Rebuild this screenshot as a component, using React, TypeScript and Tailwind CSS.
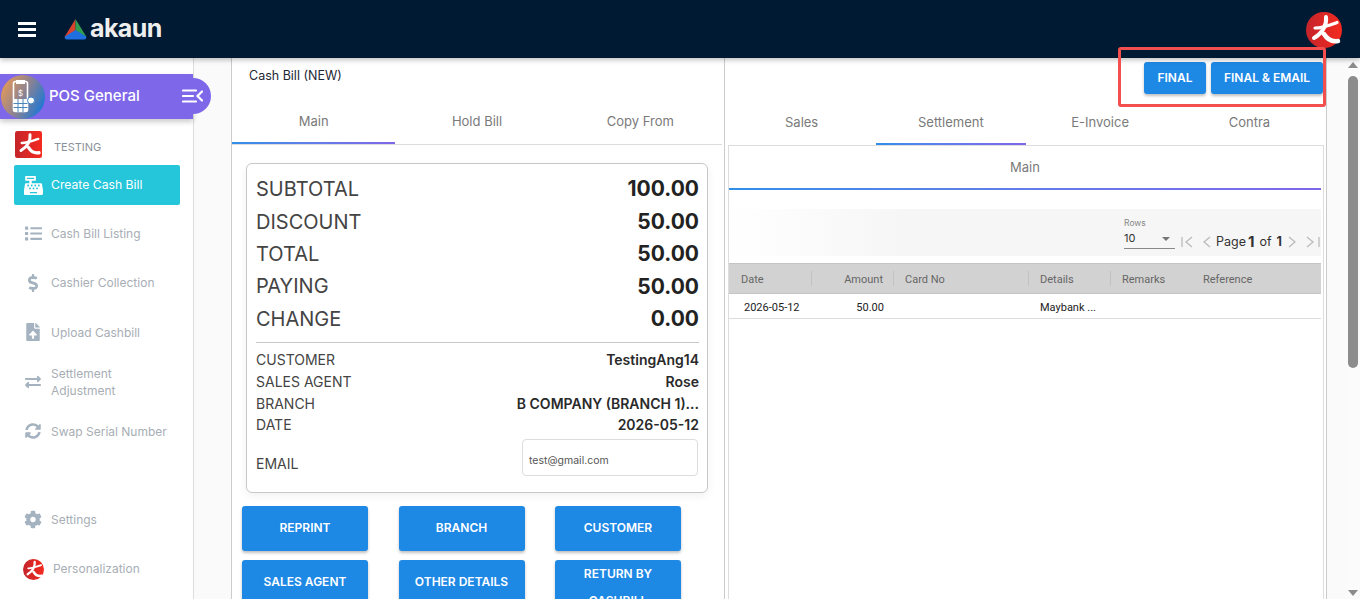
import React from "react";
import {
  FaList,
  FaDollarSign,
  FaFileUpload,
  FaExchangeAlt,
  FaSyncAlt,
  FaCog,
  FaCashRegister,
} from "react-icons/fa";

const Lucky = ({ round, size }: { round?: boolean; size: number }) => (
  <svg width={size} height={size} viewBox="0 0 36 36" className="shrink-0">
    <defs>
      <linearGradient id={round ? "luckyR" : "luckyS"} x1="0" y1="0" x2="1" y2="0">
        <stop offset="0" stopColor="#c4252b" />
        <stop offset="1" stopColor="#f42a1f" />
      </linearGradient>
    </defs>
    {round ? (
      <circle cx="18" cy="18" r="18" fill="url(#luckyR)" />
    ) : (
      <rect width="36" height="36" rx="3" fill="url(#luckyS)" />
    )}
    <g fill="none" stroke="#fff" strokeLinecap="round">
      <path d="M20 5 C21 12 17 21 8 26" strokeWidth="4" />
      <path d="M9 16 C16 16 24 13 31 10.500" strokeWidth="3.200" />
      <path d="M18 22 C21 27 26 30 32 29" strokeWidth="4.500" />
    </g>
  </svg>
);

const PosIcon = () => (
  <svg width="44" height="44" viewBox="0 0 44 44" className="shrink-0">
    <defs>
      <linearGradient id="posBg" x1="0" y1="0.2" x2="1" y2="0.7">
        <stop offset="0" stopColor="#e79a55" />
        <stop offset="0.5" stopColor="#8f8390" />
        <stop offset="1" stopColor="#1b77d6" />
      </linearGradient>
    </defs>
    <circle cx="22" cy="22" r="22" fill="url(#posBg)" />
    <rect x="12.500" y="6.500" width="14" height="30" rx="2" fill="none" stroke="#fff" strokeWidth="1.600" />
    <rect x="15" y="5" width="9" height="4" fill="#fff" />
    <text x="19.500" y="21" textAnchor="middle" fontSize="8" fill="#fff" fontFamily="Inter, sans-serif">
      $
    </text>
    <path d="M12.500 24h14v12.500h-14z" fill="#fff" />
    <path d="M17 24v13M22 24v13M12.500 28.500h14M12.500 32.500h14" stroke="#4b86b8" strokeWidth="1" />
    <circle cx="30" cy="25.500" r="3.500" fill="#fff" stroke="#3a82c8" strokeWidth="1" />
  </svg>
);

const Logo = () => (
  <svg width="23" height="21" viewBox="0 0 23 21" className="shrink-0">
    <path d="M11.500 0 L0.500 18 L5 19 L11.500 11 Z" fill="#d8432e" />
    <path d="M11.500 0 L22.500 18 L18 19 L11.500 11 Z" fill="#2f9e52" />
    <path d="M11.500 11 L22 17.500 Q23 20 20 20.500 L3 20.500 Q0 20 1 17.500 Z" fill="#1f6fe0" />
  </svg>
);

const navItems = [
  { label: "Cash Bill Listing", icon: <FaList size={17} /> },
  { label: "Cashier Collection", icon: <FaDollarSign size={18} /> },
  { label: "Upload Cashbill", icon: <FaFileUpload size={18} /> },
  { label: "Settlement Adjustment", icon: <FaExchangeAlt size={16} /> },
  { label: "Swap Serial Number", icon: <FaSyncAlt size={16} /> },
];

const summary = [
  ["SUBTOTAL", "100.00"],
  ["DISCOUNT", "50.00"],
  ["TOTAL", "50.00"],
  ["PAYING", "50.00"],
  ["CHANGE", "0.00"],
];

const details = [
  ["CUSTOMER", "TestingAng14"],
  ["SALES AGENT", "Rose"],
  ["BRANCH", "B COMPANY (BRANCH 1)..."],
  ["DATE", "2026-05-12"],
];

const actions = ["REPRINT", "BRANCH", "CUSTOMER", "SALES AGENT", "OTHER DETAILS", "RETURN BY CASHBILL"];

const App = () => {
  return (
    <div className="relative flex h-screen flex-col overflow-hidden bg-white font-['Inter',sans-serif]">
      <header className="relative z-20 flex h-[58px] shrink-0 items-center bg-[#001a33] shadow-[0_2px_5px_rgba(0,0,0,0.25)]">
        <div className="ml-[18px] flex w-[18px] flex-col gap-[3px]">
          <span className="h-[3px] bg-white" />
          <span className="h-[3px] bg-white" />
          <span className="h-[3px] bg-white" />
        </div>
        <div className="ml-[28px] flex items-center gap-[3px]">
          <Logo />
          <span className="mb-[2px] text-[25px] leading-none font-bold tracking-[-0.6px] text-[#eeeeee]">akaun</span>
        </div>
        <div className="ml-auto mr-[18px] mb-[-2px]">
          <Lucky round size={36} />
        </div>
      </header>

      <div className="flex min-h-0 flex-1">
        <aside className="relative z-10 w-[194px] shrink-0 border-r border-[#dddddd] bg-white pt-[16px]">
          <div className="relative flex h-[45px] items-center bg-[#7e67e9] shadow-[0_3px_5px_rgba(0,0,0,0.2)]">
            <div className="ml-[1px]">
              <PosIcon />
            </div>
            <span className="ml-[4px] text-[15px] font-medium text-white">POS General</span>
            <div className="absolute top-[4px] right-[-18px] flex h-[36px] w-[36px] items-center justify-center rounded-r-full bg-[#7e67e9] pr-[1px]">
              <svg width="21" height="14" viewBox="0 0 21 14" fill="none" stroke="#fff" strokeLinecap="round">
                <path d="M1 1.500h13M1 7h10M1 12.500h13" strokeWidth="2.200" />
                <path d="M20 2.500 L15.500 7 L20 11.500" strokeWidth="2.200" />
              </svg>
            </div>
          </div>

          <div className="mt-[12px] flex h-[26px] items-center pl-[15px]">
            <Lucky size={27} />
            <span className="ml-[12px] pt-[6px] text-[11px] text-[#8a9199]">TESTING</span>
          </div>

          <div className="mt-[8px] ml-[14px] mr-[13px] flex h-[40px] items-center rounded-[2px] bg-[#26c6da] pl-[10px] text-white">
            <FaCashRegister size={19} />
            <span className="ml-[8px] text-[12.200px]">Create Cash Bill</span>
          </div>

          <div className="mt-[3.500px]">
            {navItems.map((item) => (
              <div key={item.label} className="flex h-[49.500px] items-center pl-[24px] text-[#a4b3bf]">
                <span className="flex w-[18px] justify-center">{item.icon}</span>
                <span className="ml-[9px] w-[120px] text-[12px] leading-[17px] text-[#a7aeb5]">{item.label}</span>
              </div>
            ))}
            <div className="mt-[39px] flex h-[49.500px] items-center pl-[24px] text-[#a4b3bf]">
              <span className="flex w-[18px] justify-center">
                <FaCog size={19} />
              </span>
              <span className="ml-[9px] text-[12px] text-[#a7aeb5]">Settings</span>
            </div>
            <div className="flex h-[49.500px] items-center pl-[23px]">
              <Lucky round size={21} />
              <span className="ml-[9px] text-[12px] text-[#a7aeb5]">Personalization</span>
            </div>
          </div>
        </aside>

        <main className="flex min-w-0 flex-1 bg-[#fafafa] pl-[37px]">
          <section className="w-[494px] shrink-0 border-x border-[#cccccc] bg-white">
            <div className="h-[42px] pt-[9px] pl-[17px] text-[12.500px] leading-[17px] text-[#1d2733]">Cash Bill (NEW)</div>
            <div className="grid h-[45px] w-[490px] grid-cols-3 border-b border-[#dddddd] text-[13px] text-[#7a7a7a]">
              <div className="relative flex items-center justify-center pb-[1px]">
                Main
                <span className="absolute right-0 bottom-0 left-0 h-[2px] bg-gradient-to-r from-[#2e8fe8] to-[#7e67e9]" />
              </div>
              <div className="flex items-center justify-center pb-[1px]">Hold Bill</div>
              <div className="flex items-center justify-center pb-[1px]">Copy From</div>
            </div>

            <div className="mt-[18px] ml-[14px] h-[330px] w-[462px] rounded-[6px] border border-[#c8c8c8] bg-white pt-[9px] pr-[8px] pl-[9px] shadow-[0_3px_10px_rgba(0,0,0,0.06)]">
              {summary.map(([label, value]) => (
                <div key={label} className="flex h-[32.400px] items-center justify-between">
                  <span className="text-[20px] text-[#444444]">{label}</span>
                  <span className="text-[21px] font-bold text-[#222222]">{value}</span>
                </div>
              ))}
              <div className="mt-[7px] mb-[6px] border-t border-[#c8c8c8]" />
              {details.map(([label, value]) => (
                <div key={label} className="flex h-[21.700px] items-center justify-between">
                  <span className="text-[14px] text-[#444444]">{label}</span>
                  <span className="text-[14px] font-semibold text-[#2a2a2a]">{value}</span>
                </div>
              ))}
              <div className="mt-[3px] flex items-end justify-between">
                <span className="pb-[2px] text-[14px] text-[#444444]">EMAIL</span>
                <div className="mr-[1px] flex h-[37px] w-[176px] items-center rounded-[4px] border border-[#dddddd] pt-[8px] pl-[6px] text-[10.500px] text-[#555555]">
                  test@gmail.com
                </div>
              </div>
            </div>

            <div className="mt-[13px] ml-[10px] grid grid-cols-[126px_126px_126px] gap-x-[30.500px] gap-y-[9px]">
              {actions.map((a) => (
                <button
                  key={a}
                  className={
                    a === "RETURN BY CASHBILL"
                      ? "h-[45px] rounded-[3px] bg-[#1e88e5] px-[10px] text-[12px] leading-[27px] font-semibold text-white shadow-[0_2px_3px_rgba(0,0,0,0.25)]"
                      : "h-[45px] rounded-[3px] bg-[#1e88e5] px-[10px] pb-[2px] text-[12px] leading-[27px] font-semibold text-white shadow-[0_2px_3px_rgba(0,0,0,0.25)]"
                  }
                >
                  {a}
                </button>
              ))}
            </div>
          </section>

          <section className="w-[602px] shrink-0 border-r border-[#cccccc] bg-white pl-[2px]">
            <div className="flex h-[42px] items-start justify-end gap-[5px] pt-[4px] pr-[3px]">
              <button className="h-[32px] w-[62px] rounded-[3px] bg-[#1e88e5] text-[12px] font-semibold text-white shadow-[0_2px_3px_rgba(0,0,0,0.25)]">
                FINAL
              </button>
              <button className="h-[32px] w-[112px] rounded-[3px] bg-[#1e88e5] text-[12px] font-semibold text-white shadow-[0_2px_3px_rgba(0,0,0,0.25)]">
                FINAL &amp; EMAIL
              </button>
            </div>
            <div className="grid h-[45px] w-[597px] grid-cols-4 text-[13px] text-[#7a7a7a]">
              <div className="flex items-center justify-center">Sales</div>
              <div className="relative flex items-center justify-center">
                Settlement
                <span className="absolute right-0 bottom-0 left-0 h-[2px] bg-gradient-to-r from-[#2e8fe8] to-[#7e67e9]" />
              </div>
              <div className="flex items-center justify-center">E-Invoice</div>
              <div className="flex items-center justify-center">Contra</div>
            </div>
            <div className="mr-[2px] ml-[1px] h-[500px] border border-[#dddddd] pr-[2px]">
              <div className="relative flex h-[44px] items-center justify-center text-[13px] text-[#7a7a7a]">
                Main
                <span className="absolute right-0 bottom-0 left-0 h-[2px] bg-gradient-to-r from-[#2e8fe8] to-[#7e67e9]" />
              </div>

              <div className="mt-[19px] flex h-[47px] justify-end bg-gradient-to-r from-white via-[#f6f6f6] via-30% to-[#f6f6f6]">
                <div className="flex items-end pb-[7px]">
                  <div className="w-[51px]">
                    <div className="text-[8.500px] leading-[12px] text-[#888888]">Rows</div>
                    <div className="flex h-[20px] items-center justify-between border-b border-[#888888] pr-[5px] text-[11px] text-[#333333]">
                      10
                      <span className="h-0 w-0 border-x-[4px] border-t-[4px] border-x-transparent border-t-[#777777]" />
                    </div>
                  </div>
                  <div className="-mb-[3px] ml-[6px] flex h-[20px] items-center text-[#bbbbbb]">
                    <svg width="33" height="12" viewBox="0 0 33 12" fill="none" stroke="currentColor" strokeWidth="1.300">
                      <path d="M1 1v10M11 1 L5 6 L11 11M29 1 L23 6 L29 11" />
                    </svg>
                    <span className="ml-[2px] text-[12.500px] text-[#333333]">Page</span>
                    <span className="ml-[2px] text-[15px] font-bold text-[#333333]">1</span>
                    <span className="ml-[5px] text-[12.500px] text-[#333333]">of</span>
                    <span className="ml-[5px] text-[12.500px] font-bold text-[#333333]">1</span>
                    <svg width="34" height="12" viewBox="0 0 34 12" fill="none" stroke="currentColor" strokeWidth="1.300" className="ml-[5px]">
                      <path d="M2 1 L8 6 L2 11M20 1 L26 6 L20 11M32 1v10" />
                    </svg>
                  </div>
                </div>
              </div>

              <div className="mt-[7px] grid h-[31px] grid-cols-[83px_82px_135px_82px_81px_1fr] items-center border-y border-[#c4c4c4] bg-[#d2d2d2] font-['Roboto',sans-serif] text-[11px] text-[#666666]">
                <div className="flex h-[15px] items-center border-r border-[#c2c2c2] pt-[4px] pl-[12px]">Date</div>
                <div className="flex h-[15px] items-center justify-end border-r border-[#c2c2c2] pt-[4px] pr-[10px]">Amount</div>
                <div className="flex h-[15px] items-center border-r border-[#c2c2c2] pt-[4px] pl-[11px]">Card No</div>
                <div className="flex h-[15px] items-center border-r border-[#c2c2c2] pt-[4px] pl-[11px]">Details</div>
                <div className="pt-[4px] pl-[11px]">Remarks</div>
                <div className="pt-[4px] pl-[11px]">Reference</div>
              </div>
              <div className="grid h-[25px] grid-cols-[83px_82px_135px_82px_81px_1fr] items-center border-b border-[#dddddd] pt-[4px] font-['Roboto',sans-serif] text-[11px] text-[#222222]">
                <div className="pl-[15px]">2026-05-12</div>
                <div className="pr-[10px] text-right">50.00</div>
                <div />
                <div className="pl-[11px]">Maybank ...</div>
              </div>
            </div>
          </section>

          <div className="ml-[20px] flex w-[13px] shrink-0 flex-col items-center bg-[#fbfbfb] pt-[4px] pr-[1px]">
            <span className="h-0 w-0 border-x-[5px] border-b-[6px] border-x-transparent border-b-[#8c8c8c]" />
            <span className="mt-[8px] h-[292px] w-[10px] rounded-[5px] bg-[#8c8c8c]" />
            <span className="mt-auto mb-[3px] h-0 w-0 border-x-[5px] border-t-[6px] border-x-transparent border-t-[#8c8c8c]" />
          </div>
        </main>
      </div>

      <div className="absolute top-[47px] left-[1118px] z-30 h-[60px] w-[208px] rounded-[3px] border-[3px] border-[#f44f4f]" />
    </div>
  );
};

export default App;
